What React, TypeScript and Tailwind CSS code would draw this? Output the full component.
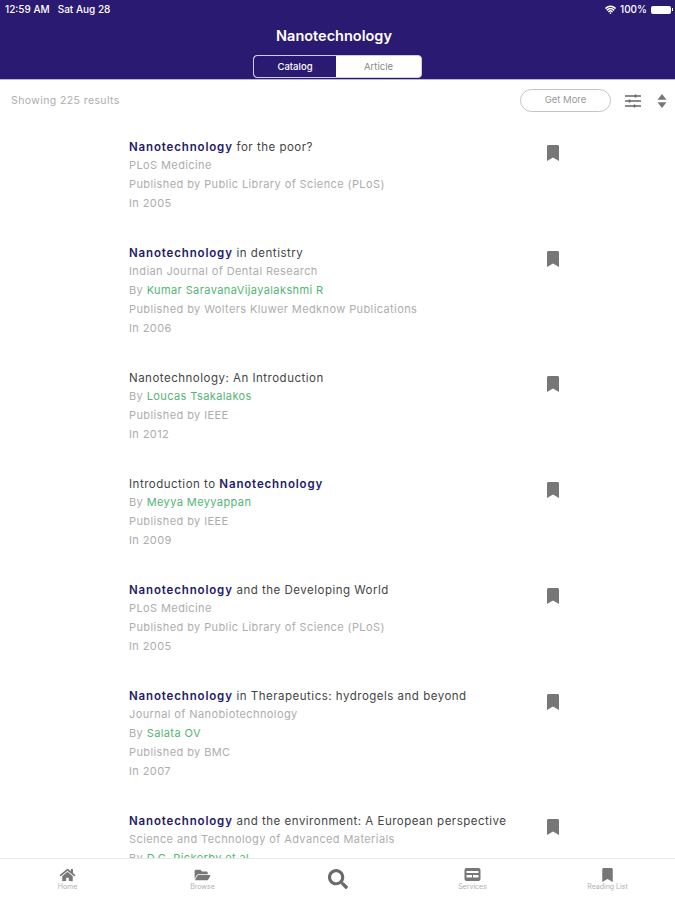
import { ReactNode } from "react";
import { FaBookmark, FaFolderOpen, FaHome, FaSearch } from "react-icons/fa";
import { Wifi } from "lucide-react";

type Article = {
  highlight?: "start" | "end";
  title: string;
  journal?: string;
  author?: string;
  publisher?: string;
  year?: string;
};

const articles: Article[] = [
  { highlight: "start", title: " for the poor?", journal: "PLoS Medicine", publisher: "Public Library of Science (PLoS)", year: "2005" },
  { highlight: "start", title: " in dentistry", journal: "Indian Journal of Dental Research", author: "Kumar SaravanaVijayalakshmi R", publisher: "Wolters Kluwer Medknow Publications", year: "2006" },
  { title: "Nanotechnology: An Introduction", author: "Loucas Tsakalakos", publisher: "IEEE", year: "2012" },
  { highlight: "end", title: "Introduction to ", author: "Meyya Meyyappan", publisher: "IEEE", year: "2009" },
  { highlight: "start", title: " and the Developing World", journal: "PLoS Medicine", publisher: "Public Library of Science (PLoS)", year: "2005" },
  { highlight: "start", title: " in Therapeutics: hydrogels and beyond", journal: "Journal of Nanobiotechnology", author: "Salata OV", publisher: "BMC", year: "2007" },
  { highlight: "start", title: " and the environment: A European perspective", journal: "Science and Technology of Advanced Materials", author: "D.G. Rickerby et al" },
];

function Line({ children }: { children: ReactNode }) {
  return <div className="h-[19px] truncate text-[11px] leading-[18px] tracking-[0.4px] text-[#adadad]">{children}</div>;
}

function ArticleRow({ article }: { article: Article }) {
  const strong = <span className="font-semibold tracking-[0.85px] text-[#241a68]">Nanotechnology</span>;
  return (
    <div className="flex pl-[129px] pr-[116px] pb-[31px]">
      <div className="min-w-0 flex-1">
        <div className="h-[18px] whitespace-pre text-[11.5px] leading-[18px] tracking-[0.5px] text-[#444]">
          {article.highlight === "start" && strong}
          {article.title}
          {article.highlight === "end" && strong}
        </div>
        {article.journal && <Line>{article.journal}</Line>}
        {article.author && (
          <Line>
            By <span className="text-[#55b476]">{article.author}</span>
          </Line>
        )}
        {article.publisher && <Line>Published by {article.publisher}</Line>}
        {article.year && <Line>In {article.year}</Line>}
      </div>
      <FaBookmark className="mt-[7px] h-4 w-3 shrink-0 text-[#777]" />
    </div>
  );
}

function TabItem({ icon, label }: { icon: ReactNode; label: string }) {
  return (
    <div className="flex flex-col items-center">
      <div className="flex h-[14px] items-start">{icon}</div>
      <span className="whitespace-nowrap text-[7px] leading-[10px] text-[#b0b0b0]">{label}</span>
    </div>
  );
}

export default function App() {
  return (
    <div className="flex h-[900px] w-[675px] flex-col overflow-hidden bg-white font-['Inter',sans-serif]">
      {/* Header */}
      <header className="h-[80px] shrink-0 border-b border-[#b9b5d6] bg-[#2a1a72] text-white">
        <div className="flex h-[19px] items-center justify-between pl-[5px] pr-[2px] text-[10px] font-medium">
          <div className="flex gap-[8px]">
            <span>12:59 AM</span>
            <span>Sat Aug 28</span>
          </div>
          <div className="flex items-center">
            <Wifi className="mr-[4px] h-[11px] w-[11px]" strokeWidth={3.5} />
            <span>100%</span>
            <div className="ml-[4px] h-[8px] w-[20px] rounded-[2px] bg-white" />
            <div className="ml-[1px] h-[3px] w-[1px] bg-white" />
          </div>
        </div>
        <h1 className="mt-[7px] pr-[7px] text-center text-[14.5px] font-semibold leading-[20px]">Nanotechnology</h1>
        <div className="mx-auto mt-[9px] flex h-[23px] w-[169px] overflow-hidden rounded-[4px] border border-[#d0cde2] bg-white text-[9.5px]">
          <div className="flex w-[82px] items-center justify-center rounded-l-[3px] border-2 border-[#2a1a72] bg-[#2a1a72] pt-[1px] font-medium text-white">Catalog</div>
          <div className="flex flex-1 items-center justify-center pt-[2px] text-[#888]">Article</div>
        </div>
      </header>

      {/* Results toolbar */}
      <div className="flex h-[40px] shrink-0 items-center pl-[11px] pr-[8px] pt-[1px]">
        <span className="flex-1 text-[10.5px] tracking-[0.4px] text-[#adadad]">Showing 225 results</span>
        <button className="flex h-[23px] w-[91px] items-center justify-center rounded-full border border-[#c4c4c4] text-[9.5px] text-[#9a9a9a]">Get More</button>
        <svg viewBox="0 0 16 14" className="ml-[14px] h-[14px] w-[16px] text-[#666]" fill="none" stroke="currentColor" strokeWidth="1.3">
          <path d="M0 2h16M0 7h16M0 12h16" />
          <path d="M10.5 .5v3M4.5 5.5v3M9.5 10.5v3" strokeWidth="1.6" />
        </svg>
        <svg viewBox="0 0 10 14" className="ml-[16px] h-[14px] w-[10px] text-[#777]" fill="currentColor">
          <path d="M5 0l4.5 5.8h-9zM5 14L.5 8.2h9z" />
        </svg>
      </div>

      {/* Article list */}
      <main className="min-h-0 flex-1 overflow-hidden pt-[18px]">
        {articles.map((article) => (
          <ArticleRow key={article.title} article={article} />
        ))}
      </main>

      {/* Bottom tabs */}
      <nav className="grid h-[42px] shrink-0 grid-cols-5 border-t border-[#e8e8e8] bg-white pt-[9px]">
        <TabItem icon={<FaHome className="h-[14px] w-[17px] text-[#777]" />} label="Home" />
        <TabItem icon={<FaFolderOpen className="h-[14px] w-[17px] text-[#777]" />} label="Browse" />
        <div className="flex justify-center pt-[1px]">
          <FaSearch className="h-[20px] w-[20px] text-[#6a6a6a]" />
        </div>
        <TabItem
          icon={
            <svg viewBox="0 0 16 13" className="h-[13px] w-[17px] text-[#777]" fill="currentColor">
              <path fillRule="evenodd" d="M2 0h12a2 2 0 0 1 2 2v9a2 2 0 0 1-2 2H2a2 2 0 0 1-2-2V2a2 2 0 0 1 2-2zm0 3v2h12V3zm0 4v2.5h5.5V7zm6.5 0v2.5H14V7z" />
            </svg>
          }
          label="Services"
        />
        <TabItem icon={<FaBookmark className="h-[14px] w-[11px] text-[#777]" />} label="Reading List" />
      </nav>
    </div>
  );
}
